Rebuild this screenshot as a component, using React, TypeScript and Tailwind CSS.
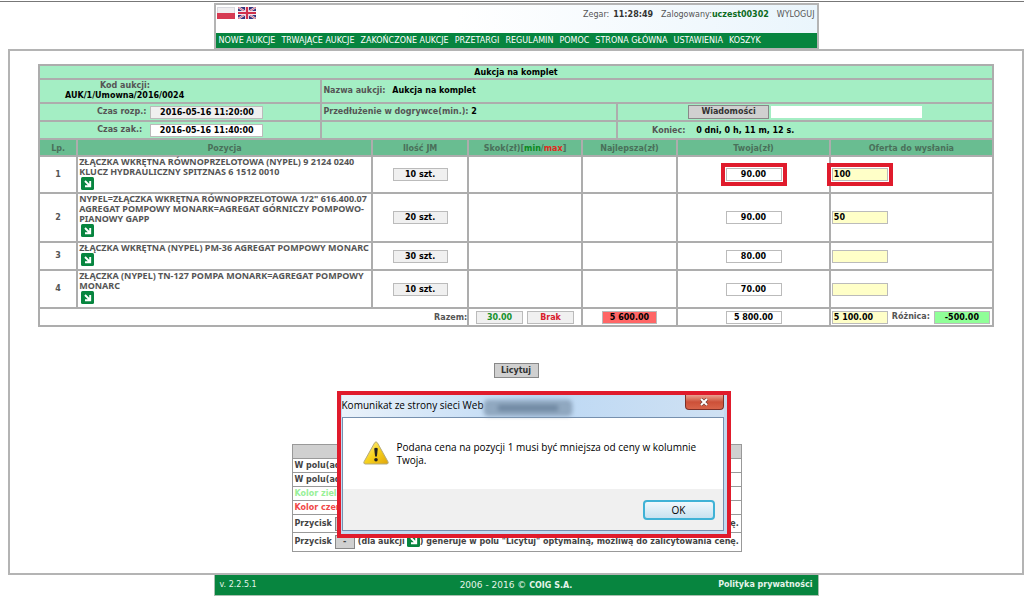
import React from 'react';

const navItems = [
  'NOWE AUKCJE',
  'TRWAJĄCE AUKCJE',
  'ZAKOŃCZONE AUKCJE',
  'PRZETARGI',
  'REGULAMIN',
  'POMOC',
  'STRONA GŁÓWNA',
  'USTAWIENIA',
  'KOSZYK',
];

type Item = { name: string; qty: string; price: string; offer: string; height: string; flagged?: boolean };

const items: Item[] = [
  {
    name: 'ZŁĄCZKA WKRĘTNA RÓWNOPRZELOTOWA (NYPEL) 9 2124 0240\nKLUCZ HYDRAULICZNY SPITZNAS 6 1512 0010',
    qty: '10 szt.',
    price: '90.00',
    offer: '100',
    height: 'h-[37px]',
    flagged: true,
  },
  {
    name: 'NYPEL=ZŁĄCZKA WKRĘTNA RÓWNOPRZELOTOWA 1/2" 616.400.07\nAGREGAT POMPOWY MONARK=AGREGAT GÓRNICZY POMPOWO-\nPIANOWY GAPP',
    qty: '20 szt.',
    price: '90.00',
    offer: '50',
    height: 'h-[49px]',
  },
  {
    name: 'ZŁĄCZKA WKRĘTNA (NYPEL) PM-36 AGREGAT POMPOWY MONARC',
    qty: '30 szt.',
    price: '80.00',
    offer: '',
    height: 'h-[28px]',
  },
  {
    name: 'ZŁĄCZKA (NYPEL) TN-127 POMPA MONARK=AGREGAT POMPOWY\nMONARC',
    qty: '10 szt.',
    price: '70.00',
    offer: '',
    height: 'h-[38px]',
  },
];

const cell = 'border-2 border-[#adadad] p-0';
const legendCell = 'border border-[#999] px-0.5 py-0 whitespace-nowrap';
const readout = 'inline-block h-[13px] border border-[#bbb] text-center leading-[12px] text-black';

function ArrowIcon() {
  return (
    <svg viewBox="0 0 13 13" className="block h-[13px] w-[13px]" aria-hidden="true">
      <rect width="13" height="13" rx="1.5" fill="#07853f" />
      <path d="M4 4l5 5M9.2 4v5.2H4" fill="none" stroke="#fff" strokeWidth="1.9" />
    </svg>
  );
}

function PolishFlag() {
  return (
    <svg viewBox="0 0 18 12" className="h-3 w-[18px]" aria-hidden="true">
      <rect width="18" height="12" fill="#d8d8de" />
      <rect x="1" y="1" width="16" height="5" fill="#f0eef0" />
      <rect y="6" width="18" height="6" fill="#d63a52" />
    </svg>
  );
}

function BritishFlag() {
  return (
    <svg viewBox="0 0 18 12" className="h-3 w-[18px]" aria-hidden="true">
      <rect width="18" height="12" fill="#35347c" />
      <path d="M0 0l18 12M18 0L0 12" stroke="#e8e4f0" strokeWidth="2.2" />
      <path d="M0 0l18 12M18 0L0 12" stroke="#d0435c" strokeWidth="0.8" />
      <path d="M9 0v12M0 6h18" stroke="#f0e8f0" strokeWidth="4" />
      <path d="M9 0v12M0 6h18" stroke="#d0304c" strokeWidth="2.2" />
    </svg>
  );
}

function WarningIcon() {
  return (
    <svg viewBox="0 0 26 24" className="h-6 w-[26px] shrink-0" aria-hidden="true">
      <defs>
        <linearGradient id="warn" x1="0" y1="0" x2="1" y2="1">
          <stop offset="0" stopColor="#fff3a0" />
          <stop offset="0.5" stopColor="#f7d21c" />
          <stop offset="1" stopColor="#e0a50c" />
        </linearGradient>
      </defs>
      <path d="M11.6 1.8q1.4-2 2.8 0l10.6 19q.8 2-1.2 2.2H2.2q-2-.2-1.2-2.2z" fill="url(#warn)" stroke="#b5ab7c" />
      <path d="M11.2 7.6q1.8-1.6 3.6 0l-.9 8h-1.8z" fill="#222" />
      <circle cx="13" cy="18.8" r="1.8" fill="#222" />
    </svg>
  );
}

function Header() {
  return (
    <header className="mx-auto w-full max-w-[605px] border-2 border-b border-[#b4b4b4]">
      <div className="flex h-[28px] items-start justify-between bg-linear-to-r from-white from-40% to-[#eaf5fc] pt-0.5 pr-0.5 pl-px">
        <div className="flex gap-[3px]">
          <a href="#pl" aria-label="Polski"><PolishFlag /></a>
          <a href="#en" aria-label="English"><BritishFlag /></a>
        </div>
        <div className="flex items-center pt-[3px] text-[#555]">
          <span>Zegar:</span>
          <b className="ml-1 text-[#333]">11:28:49</b>
          <span className="ml-2">Zalogowany:</span>
          <b className="text-[#0c6b1e]">uczest00302</b>
          <a href="#logout" className="ml-2">WYLOGUJ</a>
        </div>
      </div>
      <nav className="flex h-[15px] items-center gap-1.5 bg-[#07853f] px-[3px] text-white">
        {navItems.map((n) => (
          <a key={n} href="#menu" className="whitespace-nowrap">{n}</a>
        ))}
      </nav>
    </header>
  );
}

function AuctionTable() {
  const info = `${cell} bg-[#a4eec4]`;
  return (
    <table className="w-full table-fixed border-collapse">
      <colgroup>
        <col className="w-[4%]" />
        <col className="w-[25.6%]" />
        <col className="w-[5.3%]" />
        <col className="w-[10.1%]" />
        <col className="w-[11.9%]" />
        <col className="w-[3.7%]" />
        <col className="w-[6.3%]" />
        <col className="w-[16%]" />
        <col className="w-[17.1%]" />
      </colgroup>
      <tbody>
        <tr className="h-[14px]">
          <th colSpan={9} className={`${info} pt-px text-black`}>Aukcja na komplet</th>
        </tr>
        <tr className="h-[24px]">
          <td colSpan={2} className={info}>
            <div className="pl-[60px]">Kod aukcji:</div>
            <div className="pl-[25px] text-black">AUK/1/Umowna/2016/0024</div>
          </td>
          <td colSpan={7} className={`${info} pl-px`}>
            Nazwa aukcji: <span className="ml-1 text-black">Aukcja na komplet</span>
          </td>
        </tr>
        <tr className="h-[18px]">
          <td colSpan={2} className={info}>
            <div className="flex items-center justify-center gap-1">
              Czas rozp.: <span className={`${readout} w-[113px] bg-[#f0f0f0]`}>2016-05-16 11:20:00</span>
            </div>
          </td>
          <td colSpan={4} className={`${info} pl-px`}>
            Przedłużenie w dogrywce(min.): <span className="text-black">2</span>
          </td>
          <td colSpan={3} className={info}>
            <div className="flex items-center justify-center gap-0.5">
              <button type="button" className="h-[14px] w-[81px] border border-[#888] bg-[#d0d0d0] leading-3 text-[#333]">
                Wiadomości
              </button>
              <input aria-label="Wiadomości" className="h-3 w-[151px] bg-white" />
            </div>
          </td>
        </tr>
        <tr className="h-[18px]">
          <td colSpan={2} className={info}>
            <div className="flex items-center justify-center gap-2">
              Czas zak.: <span className={`${readout} w-[113px] bg-white`}>2016-05-16 11:40:00</span>
            </div>
          </td>
          <td colSpan={4} className={info} />
          <td colSpan={3} className={`${info} pt-0.5 pl-[34px]`}>
            Koniec: <span className="ml-2 text-black">0 dni, 0 h, 11 m, 12 s.</span>
          </td>
        </tr>
        <tr className="h-[17px] bg-[#69bd91] text-[#49705a]">
          <th className={`${cell} pt-0.5`}>Lp.</th>
          <th colSpan={2} className={`${cell} pt-0.5`}>Pozycja</th>
          <th className={`${cell} pt-0.5`}>Ilość JM</th>
          <th className={`${cell} pt-0.5`}>
            Skok(zł)[<span className="text-[#0a8a1c]">min</span>/<span className="text-[#e02a1c]">max</span>]
          </th>
          <th colSpan={2} className={`${cell} pt-0.5`}>Najlepsza(zł)</th>
          <th className={`${cell} pt-0.5`}>Twoja(zł)</th>
          <th className={`${cell} pt-0.5`}>Oferta do wysłania</th>
        </tr>
        {items.map((it, i) => (
          <tr key={it.name} className={it.height}>
            <td className={`${cell} text-center`}>{i + 1}</td>
            <td
              colSpan={2}
              className={`${cell} pl-px align-top font-['Noto_Sans','DejaVu_Sans',sans-serif] text-[9px] leading-[10px] whitespace-pre`}
            >
              {it.name}
              <a href="#details" aria-label="Szczegóły" className="ml-0.5 block w-[13px]"><ArrowIcon /></a>
            </td>
            <td className={`${cell} text-center`}>
              <span className={`${readout} w-[55px] bg-[#f0f0f0] align-middle`}>{it.qty}</span>
            </td>
            <td className={cell} />
            <td colSpan={2} className={cell} />
            <td className={`${cell} text-center`}>
              <span
                className={`${readout} w-[56px] bg-white align-middle ${it.flagged ? 'outline-4 outline-offset-1 outline-[#e01b2c]' : ''}`}
              >
                {it.price}
              </span>
            </td>
            <td className={`${cell} pl-px`}>
              <input
                aria-label={`Oferta ${i + 1}`}
                defaultValue={it.offer}
                className={`block h-[13px] w-[56px] border border-[#bbb] bg-[#ffffc8] px-px text-black ${it.flagged ? 'relative outline-4 outline-offset-1 outline-[#e01b2c]' : ''}`}
              />
            </td>
          </tr>
        ))}
        <tr className="h-[18px]">
          <td colSpan={4} className={`${cell} pt-0.5 text-right`}>Razem:</td>
          <td className={cell}>
            <div className="flex justify-center gap-1">
              <span className={`${readout} w-[47px] bg-[#f0f0f0]`}><span className="text-[#16902c]">30.00</span></span>
              <span className={`${readout} w-[47px] bg-[#f0f0f0]`}><span className="text-[#d8202c]">Brak</span></span>
            </div>
          </td>
          <td colSpan={2} className={cell}>
            <div className="flex justify-center"><span className={`${readout} w-[55px] bg-[#ff6666]`}>5 600.00</span></div>
          </td>
          <td className={cell}>
            <div className="flex justify-center"><span className={`${readout} w-[56px] bg-white`}>5 800.00</span></div>
          </td>
          <td className={`${cell} pl-px`}>
            <div className="flex items-center gap-1">
              <input aria-label="Razem oferta" defaultValue="5 100.00" className="h-[13px] w-[56px] border border-[#bbb] bg-[#ffffc8] px-px text-black" />
              <span>Różnica:</span>
              <span className={`${readout} w-[56px] bg-[#90ff98]`}>-500.00</span>
            </div>
          </td>
        </tr>
      </tbody>
    </table>
  );
}

function Legend() {
  return (
    <table className="w-full border-collapse text-[#444]">
      <tbody>
        <tr className="h-[14px]"><td className={`${legendCell} bg-[#d0d0d0]`} /></tr>
        <tr className="h-[14px]"><td className={legendCell}>W polu(ad</td></tr>
        <tr className="h-[14px]"><td className={legendCell}>W polu(ad</td></tr>
        <tr className="h-[14px]"><td className={`${legendCell} text-[#98f098]`}>Kolor ziel</td></tr>
        <tr className="h-[14px]"><td className={`${legendCell} text-[#f04848]`}>Kolor czer</td></tr>
        <tr className="h-[18px]">
          <td className={legendCell}>
            <div className="flex items-center gap-[3px]">
              Przycisk
              <button type="button" aria-label="Plus" className="h-[14px] w-5 border border-[#888] bg-[#d0d0d0]" />
              <span className="ml-auto">ę.</span>
            </div>
          </td>
        </tr>
        <tr className="h-[19px]">
          <td className={legendCell}>
            <div className="flex items-center gap-[3px]">
              Przycisk
              <button type="button" className="h-[14px] w-5 border border-[#888] bg-[#d0d0d0] leading-3">-</button>
              <span className="flex items-center">(dla aukcji <span className="mb-1 ml-0.5"><ArrowIcon /></span>)</span>
              <span>generuje w polu "Licytuj" optymalną, możliwą do zalicytowania cenę.</span>
            </div>
          </td>
        </tr>
      </tbody>
    </table>
  );
}

function MessageDialog() {
  return (
    <div
      role="dialog"
      aria-label="Komunikat ze strony sieci Web"
      className="absolute -top-[53px] left-[45px] w-[394px] border-4 border-[#e01b2c] bg-[#c3daf0] pr-[3px] pb-[3px] pl-px font-['Open_Sans','Noto_Sans',sans-serif] text-[10px] font-normal text-black"
    >
      <div className="flex h-[22px] items-start bg-linear-to-r from-[#eaf2fa] via-[#bcd8f4] to-[#cfe1f3]">
        <span className="pt-[5px] whitespace-nowrap">Komunikat ze strony sieci Web</span>
        <span className="mt-[5px] h-4 min-w-0 max-w-[88px] flex-1 rounded-sm border border-[#7c92aa] bg-[#90a8c0] p-1 blur-[2px]">
          <span className="mx-auto block h-1.5 w-[60px] bg-[#6f88a2]" />
        </span>
        <button
          type="button"
          aria-label="Zamknij"
          className="ml-auto flex h-[15px] w-[39px] items-center justify-center rounded-b border border-t-0 border-[#7c3028] bg-linear-to-b from-[#e8a090] via-[#cc5038] to-[#d8644a]"
        >
          <svg viewBox="0 0 10 8" className="h-2 w-2.5" aria-hidden="true">
            <path d="M2 1l6 6M8 1L2 7" stroke="#6b3a34" strokeWidth="3.2" />
            <path d="M2 1l6 6M8 1L2 7" stroke="#fff" strokeWidth="2" />
          </svg>
        </button>
      </div>
      <div className="border border-[#7690ae] bg-white">
        <div className="flex h-[71px] gap-2 pt-[23px] pl-5">
          <WarningIcon />
          <p className="leading-[13px]">
            Podana cena na pozycji 1 musi być mniejsza od ceny w kolumnie
            <br />
            Twoja.
          </p>
        </div>
        <div className="flex h-[41px] items-start justify-end bg-[#f0f0f0] pt-[11px] pr-2">
          <button type="button" className="h-5 w-[72px] rounded-sm border-2 border-[#3fb2d6] bg-linear-to-b from-[#f0f8fc] to-[#c8e2f0] leading-4">
            OK
          </button>
        </div>
      </div>
    </div>
  );
}

export default function App() {
  return (
    <div className="min-h-screen bg-white pt-px font-['DejaVu_Sans',Verdana,sans-serif] text-[8px] leading-[10px] text-[#555]">
      <div className="border-t border-[#777] pt-px pl-2">
        <Header />
        <main className="border-2 border-[#b4b4b4] px-[28px] pt-[13px] pb-[21px] font-bold">
          <AuctionTable />
          <div className="mt-9 flex justify-center">
            <button type="button" className="h-[15px] w-[45px] border border-[#888] bg-[#d0d0d0] leading-3 text-[#333]">Licytuj</button>
          </div>
          <div className="relative mx-auto mt-[66px] w-[449px]">
            <Legend />
            <MessageDialog />
          </div>
        </main>
        <footer className="mx-auto grid h-[21px] w-full max-w-[605px] grid-cols-3 items-center border border-t-0 border-[#a8c0b0] bg-[#07853f] px-[5px] text-[#e4f4ea]">
          <span>v. 2.2.5.1</span>
          <span className="text-center text-[9px]">2006 - 2016 © <b className="text-[8px]">COIG S.A.</b></span>
          <a href="#privacy" className="text-right font-bold">Polityka prywatności</a>
        </footer>
      </div>
    </div>
  );
}
